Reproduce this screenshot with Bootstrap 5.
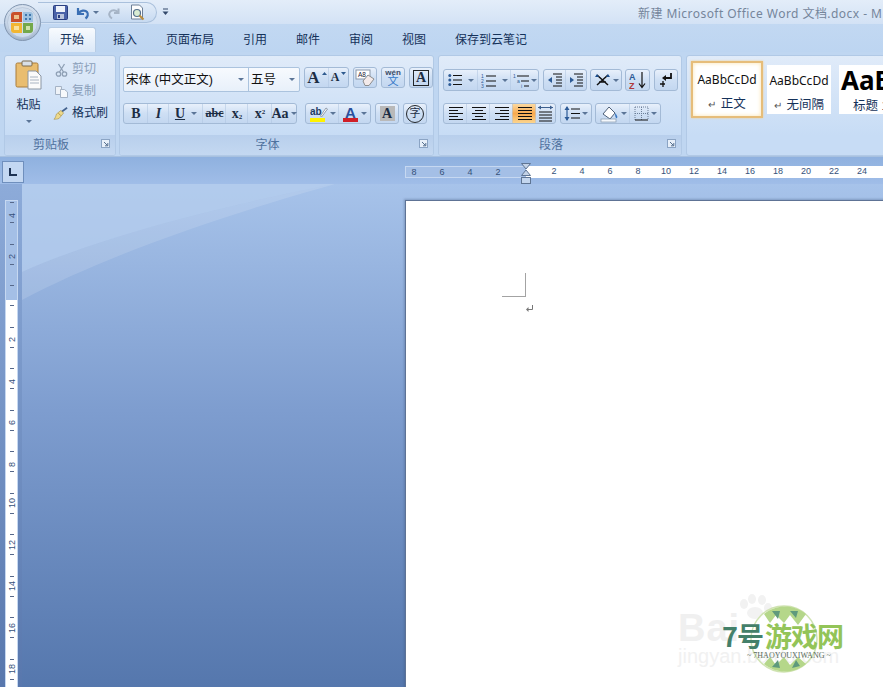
<!DOCTYPE html>
<html lang="zh-CN">
<head>
<meta charset="utf-8">
<title>新建 Microsoft Office Word 文档.docx</title>
<link href="https://cdn.jsdelivr.net/npm/bootstrap@5.3.0/dist/css/bootstrap.min.css" rel="stylesheet">
<style>
html,body{height:100%;margin:0;overflow:hidden}
body{font-family:"Liberation Sans","Noto Sans CJK SC",sans-serif;font-size:12px;color:#15325a;background:#bdd5f0}
.wd-app{width:883px;height:687px}
.wd-title{height:24px;background:linear-gradient(#e3edf9,#d3e2f5);flex:none}
.wd-qat{margin-left:38px;margin-top:2px;width:119px;height:21px;border:1px solid #a9c0dc;border-left:0;border-radius:0 11px 11px 0;background:linear-gradient(#e3edf9,#c7daf1);padding-left:15px;gap:8px}
.wd-undo{gap:3px}
.wd-caption{margin-left:auto;color:#75859b;font:12px/28px "Noto Sans","Noto Sans CJK SC",sans-serif;white-space:nowrap;width:245px;flex:none;letter-spacing:.45px}
.wd-qatmore{margin-left:5px;margin-top:8px}
.wd-orb{left:4px;top:4px;width:38px;height:38px;z-index:3}
.wd-tabs{height:28px;flex:none;padding-left:48px;background:linear-gradient(#c2d8f2,#bdd5f1);flex-wrap:nowrap}
.wd-tabs .nav-link{padding:0 13.5px;height:25px;margin-top:3px;color:#15325a;font-size:12px;line-height:24px;border:1px solid transparent;white-space:nowrap}
.wd-tabs .nav-link.active{padding:0 11px;margin-right:1px;width:48px;height:26px;background:linear-gradient(#f8fbfe,#dbe8f8);border-color:#b7cce4 #b7cce4 transparent;border-radius:3px 3px 0 0}
.wd-tabs .wd-tab-first{padding-left:15px}
.wd-ribbon{height:105px;flex:none;padding:3px 0 0 4px;gap:3px;background:#bfd6f1;border-bottom:1px solid #a8c1e0}
.wd-grp{height:101px;border:1px solid #b1c9e6;border-radius:3px;background:linear-gradient(#e0ebf9,#c7dcf5 80%);flex:none;overflow:hidden}
.wd-g1{width:112px}.wd-g2{width:315px}.wd-g3{width:244px;margin-left:1px}.wd-g4{width:205px;margin-left:1px}
.wd-body{flex:1 1 auto;min-height:0}
.wd-foot{height:20px;flex:none;padding-right:18px;text-align:center;color:#4f719e;font-size:12px;line-height:21px;background:linear-gradient(#b8cfec,#c4d8f1)}
.wd-launch{right:5px;bottom:7px;display:block}
.wd-paste{width:47px;padding-top:4px;text-align:center}
.wd-paste-txt{margin-top:8px;font-size:12px;line-height:14px;color:#15325a}
.wd-clip{padding-top:5px;gap:5px;margin-left:3px}
.wd-clip-item{height:17px;gap:4px;line-height:17px;color:#15325a}
.wd-clip-off{color:#8ba0ba}
.wd-brush{margin-left:-2px}
.wd-row1{padding-top:11px;padding-left:3px;height:37px}
.wd-row2{padding-top:10px;padding-left:3px}
.wd-gap{gap:4px}
.wd-combo{height:25px;width:178px;border:1px solid #abc3de;background:linear-gradient(#f7fafe,#e8f0fa);border-radius:2px}
.wd-combo-a{width:125px;border-right:1px solid #abc3de;padding-left:2px;line-height:22px;font-size:12.5px;color:#111}
.wd-combo-b{flex:1;padding-left:2px;line-height:22px;font-size:12.5px;color:#111}
.btn-group.wd-clu{border:1px solid #a3bad6;border-radius:3px;background:linear-gradient(#e8f0fb,#cedff4 50%,#c3d7f0);flex:none}
.btn.wd-tool{padding:0;border:0;border-radius:0;height:19px;min-width:20px;display:inline-flex;align-items:center;justify-content:center;gap:2px;background:transparent;font-size:12px;color:#1c2d44;line-height:1;flex:none}
.btn.wd-tool+.btn.wd-tool{border-left:1px solid rgba(174,197,224,.55)}
.btn.wd-tool.wd-on{background:linear-gradient(#fbd9a0,#f8a94e 50%,#fbd58f)}
.wd-bold{font:700 14px "Liberation Serif",serif}
.wd-it{font:italic 700 14px "Liberation Serif",serif}
.wd-un{font:700 14px "Liberation Serif",serif;text-decoration:underline}
.wd-st{font:700 12px "Liberation Serif",serif;text-decoration:line-through}
.wd-dd{display:inline-block;width:0;height:0;border:3px solid transparent;border-top:3px solid #5b7597;border-bottom:0;flex:none}
.wd-single{width:24px;flex:none}
.wd-galitem{height:49px;width:64px;background:#fff;text-align:center;margin-top:4px;flex:none;overflow:hidden}
.wd-galitem.wd-sel{height:57px;width:72px;margin-top:0;border:2px solid #e6bd7a;box-shadow:0 0 4px #fbe3ae inset,0 0 2px #f5d08c;padding-top:6px}
.wd-aa{font:12px/22px "Noto Sans",sans-serif;color:#111;white-space:nowrap;margin-top:5px}
.wd-sel .wd-aa{margin-top:0}
.wd-big{font:700 26px/30px "Noto Sans",sans-serif;color:#000;text-align:left;padding-left:2px;white-space:nowrap}
.wd-gl{font-size:12.5px;line-height:16px;color:#15325a;white-space:nowrap;margin-top:5px}
.wd-gl2{text-align:left;padding-left:14px;margin-top:3px}
.wd-rt{font-size:10px;color:#555;margin-right:1px}
.wd-gal{padding:5px 0 0 4px;gap:4px}
.wd-rulerrow{height:27px;flex:none;background:linear-gradient(#8fb1df,#a0bde8)}
.wd-lbox{width:22px;height:22px;margin:4px 0 0 2px;border:1px solid #6f8fbd;background:#c3d7f2;flex:none}
.wd-hr{margin:9px 0 0 381px;height:12px;width:478px;overflow:hidden;flex:none}
.wd-hr-d{width:121px;flex:none;padding-right:14px;background:#a4bfe6;border:1px solid #c6d8f1;border-right:0;justify-content:flex-end}
.wd-hr-l{flex:1 1 auto;padding-left:14px;background:#fff}
.wd-hc{width:28px;flex:none;text-align:center;font-size:9px;line-height:11px;color:#35517a}
.wd-work{flex:1 1 auto;min-height:0}
.wd-strip{width:22px;flex:none;background:linear-gradient(#8dabd9,#5877ad);padding-left:5px}
.wd-vr{width:13px;height:100%;overflow:hidden;margin-top:16px;background:linear-gradient(#a4bfe6 99px,#fff 99px);border:1px solid #c6d8f1;border-bottom:0}
.wd-vc{height:41.5px;flex:none;gap:4.6px;color:#35517a;font-size:9px}
.wd-vc:first-child{margin-top:-9px}
.wd-vt{width:4px;height:1px;background:#56688a;flex:none}
.wd-vn{height:10px;line-height:10px;writing-mode:vertical-rl;transform:rotate(180deg);flex:none;white-space:nowrap}
.wd-desk{flex:1 1 auto;min-width:0;background:linear-gradient(#a7c3ea 0,#7e9dcf 45%,#5577ad 100%);padding:16px 0 0 383px;overflow:hidden}
.wd-swoosh{left:0;top:0}
.wd-page{width:500px;height:520px;background:#fff;border-left:1px solid #5e7395;border-top:1px solid #5e7395;padding:72px 0 0 96px;box-shadow:-1px -1px 2px rgba(60,80,120,.35);z-index:1}
.wd-crop{width:24px;height:24px;border-right:1px solid #a3a3a3;border-bottom:1px solid #a3a3a3}
.wd-ret{margin:7px 0 0 23px;display:block}
.wd-mark{left:272px;top:393px;width:175px;height:80px;z-index:2}
.wd-mk-bai{left:0;top:15px;font:700 38px/38px "Liberation Sans",sans-serif;color:#f0f0f0;letter-spacing:1px}
.wd-mk-jy{left:0;top:52px;font:20px/20px "Liberation Sans",sans-serif;color:#f1f1f1;white-space:nowrap}
.wd-mk-7{left:44px;top:27px;font:700 27px/30px "Noto Sans CJK SC",sans-serif;color:#44806a;white-space:nowrap;letter-spacing:-1px}
.wd-mk-7 em{font-style:normal;color:#93c458;margin-left:2px}
.wd-mk-sub{left:69px;top:57px;font:8px/9px "Liberation Serif",serif;color:#5b6d60;white-space:nowrap}
</style>
</head>
<body>
<svg width="0" height="0" class="position-absolute">
<defs>
<g id="i-al"><path d="M1 2h14M1 5h9M1 8h14M1 11h9M1 14h14" stroke="#111" stroke-width="1.2" fill="none" transform="translate(0 -.5)"/></g>
<g id="i-ac"><path d="M1 2h14M4 5h8M1 8h14M4 11h8M1 14h14" stroke="#111" stroke-width="1.2" fill="none" transform="translate(0 -.5)"/></g>
<g id="i-ar"><path d="M1 2h14M6 5h9M1 8h14M6 11h9M1 14h14" stroke="#111" stroke-width="1.2" fill="none" transform="translate(0 -.5)"/></g>
<g id="i-aj"><path d="M1 2h14M1 5h14M1 8h14M1 11h14M1 14h14" stroke="#111" stroke-width="1.2" fill="none" transform="translate(0 -.5)"/></g>
<g id="i-la"><rect x=".5" y=".5" width="8" height="8" fill="#e7eff9" stroke="#8ba4c4"/><path d="M3 3l3.500 3.500M6.800 4v2.800H4" stroke="#56708f" fill="none"/></g>
</defs>
</svg>
<div class="wd-app d-flex flex-column position-relative overflow-hidden">

  <svg class="wd-orb position-absolute" viewBox="0 0 38 38" aria-label="Office">
    <defs>
      <radialGradient id="orb" cx=".5" cy=".35" r=".7"><stop offset="0" stop-color="#f2f6fb"/><stop offset=".7" stop-color="#c4d3e6"/><stop offset="1" stop-color="#8ea2bb"/></radialGradient>
    </defs>
    <circle cx="18.500" cy="18.500" r="18" fill="url(#orb)" stroke="#8296b0"/>
    <circle cx="18.500" cy="18.500" r="15" fill="#cfdcec" stroke="#aebed2" stroke-width=".6"/>
    <path d="M7 11q0-3 3-3h8v10H7z" fill="#c9512b"/>
    <rect x="10" y="11" width="5" height="4" fill="#ecc18c"/>
    <path d="M19 8h7q3 0 3 3v7H19z" fill="#9dc1df"/>
    <path d="M21 10h2v2h-2zM25 10h2v2h-2zM21 14h2v2h-2zM25 14h2v2h-2z" fill="#3f77ad"/>
    <path d="M7 19h11v10h-8q-3 0-3-3z" fill="#f2b632"/>
    <rect x="10" y="22" width="5" height="4" fill="#f9e29c"/>
    <path d="M19 19h10v7q0 3-3 3h-7z" fill="#74a84a"/>
    <rect x="22" y="22" width="4" height="4" fill="#cfe3a8"/>
  </svg>

  <div class="wd-title d-flex">
    <div class="wd-qat d-flex align-items-center">
      <svg width="15" height="15" viewBox="0 0 15 15" aria-label="保存"><rect x=".5" y=".5" width="14" height="14" rx="1" fill="#4a62a8" stroke="#2b3f80"/><rect x="3" y="1" width="9" height="6" fill="#eef2fa"/><rect x="4" y="9" width="7" height="5" fill="#b9c4dc"/><rect x="5" y="10" width="2" height="3" fill="#2b3f80"/></svg>
      <span class="wd-undo d-inline-flex align-items-center">
      <svg width="14" height="14" viewBox="0 0 14 14" aria-label="撤消"><path d="M2 2v6h6M2.600 7.400C4.500 4.400 9 3.600 11 6c1.600 2 .8 4.800-1.500 6.500" fill="none" stroke="#3a6fb4" stroke-width="2.200"/></svg>
      <span class="wd-dd"></span></span>
      <svg width="14" height="14" viewBox="0 0 14 14" aria-label="恢复"><path d="M11.500 2.500v4.500h-4.500M11 6.500C9 3.500 5 3.500 3 6c-1.600 2.200-.5 5 2 6.500" fill="none" stroke="#a6b4c6" stroke-width="2"/></svg>
      <svg width="17" height="17" viewBox="0 0 17 17" aria-label="打印预览"><path d="M2.500 1h8l3 3v11h-11z" fill="#fdfdfd" stroke="#6d7f96"/><circle cx="8" cy="9" r="3.500" fill="#d9ecd2" stroke="#55708c" stroke-width="1.200"/><path d="M10.500 11.500l4 4" stroke="#b98c3b" stroke-width="2"/></svg>
    </div>
    <svg class="wd-qatmore" width="7" height="9" viewBox="0 0 7 9"><path d="M1 1h5" stroke="#33496b"/><path d="M.5 3.500h6L3.500 7z" fill="#33496b"/></svg>
    <div class="wd-caption">新建 Microsoft Office Word 文档.docx - M</div>
  </div>

  <ul class="nav wd-tabs">
    <li class="nav-item"><a class="nav-link active text-center" href="#">开始</a></li>
    <li class="nav-item"><a class="nav-link wd-tab-first" href="#">插入</a></li>
    <li class="nav-item"><a class="nav-link" href="#">页面布局</a></li>
    <li class="nav-item"><a class="nav-link" href="#">引用</a></li>
    <li class="nav-item"><a class="nav-link" href="#">邮件</a></li>
    <li class="nav-item"><a class="nav-link" href="#">审阅</a></li>
    <li class="nav-item"><a class="nav-link" href="#">视图</a></li>
    <li class="nav-item"><a class="nav-link" href="#">保存到云笔记</a></li>
  </ul>

  <div class="wd-ribbon d-flex">

    <section class="wd-grp wd-g1 d-flex flex-column position-relative">
      <div class="wd-body d-flex">
        <div class="wd-paste d-flex flex-column align-items-center">
          <svg width="28" height="30" viewBox="0 0 28 30" aria-label="粘贴"><rect x="1" y="3" width="22" height="24" rx="1.500" fill="#e9bd6f" stroke="#a97d3c"/><rect x="7" y="1" width="10" height="5" rx="1" fill="#d9dfe6" stroke="#7d6a4c"/><path d="M13 11h8l5 5v13H13z" fill="#fbfbfb" stroke="#8b96a3"/><path d="M15 17h8M15 20h9M15 23h9" stroke="#a9b4c2"/></svg>
          <div class="wd-paste-txt">粘贴</div>
          <span class="wd-dd mt-2"></span>
        </div>
        <div class="wd-clip d-flex flex-column">
          <div class="wd-clip-item wd-clip-off d-flex align-items-center"><svg width="13" height="14" viewBox="0 0 13 14" aria-label="剪切"><path d="M3.500 1l5 8M9.500 1l-5 8" stroke="#8fa0b5" stroke-width="1.300"/><circle cx="3.500" cy="11" r="2.200" fill="none" stroke="#8fa0b5" stroke-width="1.300"/><circle cx="9.500" cy="11" r="2.200" fill="none" stroke="#8fa0b5" stroke-width="1.300"/></svg>剪切</div>
          <div class="wd-clip-item wd-clip-off d-flex align-items-center"><svg width="13" height="13" viewBox="0 0 13 13" aria-label="复制"><path d="M.5 1.500h6v8h-6z" fill="#eef2f7" stroke="#a5b3c5"/><path d="M5.500 4.500h4l3 2.500v5.500h-7z" fill="#f7f9fb" stroke="#a5b3c5"/></svg>复制</div>
          <div class="wd-clip-item d-flex align-items-center"><svg class="wd-brush" width="15" height="15" viewBox="0 0 17 15" aria-label="格式刷"><path d="M16 1L9 6" stroke="#46648f" stroke-width="2"/><path d="M9 4l3 3-5 6c-2 1-4 1-6 1 2-1 2-4 3-6z" fill="#edd98b" stroke="#a99148" stroke-width=".7"/><path d="M6 7l3 3" stroke="#a99148"/></svg>格式刷</div>
        </div>
      </div>
      <div class="wd-foot">剪贴板</div>
      <svg class="wd-launch position-absolute" width="9" height="9" viewBox="0 0 9 9"><use href="#i-la"/></svg>
    </section>

    <section class="wd-grp wd-g2 d-flex flex-column position-relative">
      <div class="wd-body">
        <div class="wd-row1 d-flex wd-gap">
          <div class="wd-combo d-flex flex-none">
            <div class="wd-combo-a d-flex align-items-center justify-content-between pe-1"><span>宋体 (中文正文)</span><span class="wd-dd"></span></div>
            <div class="wd-combo-b d-flex align-items-center justify-content-between pe-1"><span>五号</span><span class="wd-dd"></span></div>
          </div>
          <div class="btn-group wd-clu align-self-start">
            <button class="btn wd-tool" style="width:24px"><span style="font:700 17px 'Liberation Serif',serif">A</span><svg width="5" height="3" viewBox="0 0 5 3" class="mb-2"><path d="M0 3h5L2.500 0z" fill="#2f5b8f"/></svg></button>
            <button class="btn wd-tool" style="width:20px"><span style="font:700 12px 'Liberation Serif',serif">A</span><svg width="5" height="3" viewBox="0 0 5 3" class="mb-2"><path d="M0 0h5L2.500 3z" fill="#2f5b8f"/></svg></button>
          </div>
          <div class="btn-group wd-clu align-self-start wd-single">
            <button class="btn wd-tool w-100"><svg width="20" height="18" viewBox="0 0 20 18" aria-label="清除格式"><rect x="1" y="1" width="14" height="9" fill="#fff" stroke="#8a98aa"/><text x="3" y="8" font-size="6.500" font-family="Liberation Sans" fill="#223">A8</text><path d="M8 12l5-6 6 4-5 6.500H10z" fill="#f3eaea" stroke="#8d8d8d"/></svg></button>
          </div>
          <div class="btn-group wd-clu align-self-start wd-single">
            <button class="btn wd-tool w-100 flex-column"><svg width="22" height="19" viewBox="0 0 22 19" aria-label="拼音指南"><text x="11" y="6.500" text-anchor="middle" font-size="8" font-weight="700" font-family="Liberation Sans" fill="#3a4a66">wén</text><text x="11" y="17" text-anchor="middle" font-size="11" font-family="Noto Sans CJK SC" fill="#3478c8">文</text></svg></button>
          </div>
          <div class="btn-group wd-clu align-self-start wd-single">
            <button class="btn wd-tool w-100"><span class="border border-dark d-inline-flex align-items-center justify-content-center" style="width:16px;height:16px;font:700 14px 'Liberation Serif',serif">A</span></button>
          </div>
        </div>
        <div class="wd-row2 d-flex wd-gap">
          <div class="btn-group wd-clu">
            <button class="btn wd-tool" style="width:24px"><span class="wd-bold">B</span></button>
            <button class="btn wd-tool" style="width:22px"><span class="wd-it">I</span></button>
            <button class="btn wd-tool" style="width:35px"><span class="wd-un">U</span><span class="wd-dd ms-1"></span></button>
            <button class="btn wd-tool" style="width:24px"><span class="wd-st">abc</span></button>
            <button class="btn wd-tool" style="width:23px"><span class="wd-bold">x<sub style="font-size:7px">2</sub></span></button>
            <button class="btn wd-tool" style="width:25px"><span class="wd-bold">x<sup style="font-size:7px">2</sup></span></button>
            <button class="btn wd-tool" style="width:25px"><span class="wd-bold">Aa</span><span class="wd-dd"></span></button>
          </div>
          <div class="btn-group wd-clu ms-1">
            <button class="btn wd-tool" style="width:33px"><svg width="18" height="18" viewBox="0 0 18 18" aria-label="突出显示"><text x="0" y="10" font-size="10" font-weight="700" font-family="Liberation Sans" fill="#223b63">ab</text><path d="M10.500 11l5.500-8 1.500 1-6 8z" fill="#fff" stroke="#6b7a8c" stroke-width=".7"/><rect x="0" y="13" width="15" height="4" fill="#fff200"/></svg><span class="wd-dd"></span></button>
            <button class="btn wd-tool" style="width:32px"><svg width="17" height="18" viewBox="0 0 17 18" aria-label="字体颜色"><text x="8.500" y="12.500" text-anchor="middle" font-size="15" font-weight="700" font-family="Liberation Sans" fill="#2a4f9c">A</text><rect x="1" y="13" width="15" height="4" fill="#d01f27"/></svg><span class="wd-dd"></span></button>
          </div>
          <div class="btn-group wd-clu wd-single">
            <button class="btn wd-tool w-100"><span class="d-inline-flex align-items-center justify-content-center" style="width:15px;height:15px;background:#b9b9b9;font:700 14px 'Liberation Serif',serif">A</span></button>
          </div>
          <div class="btn-group wd-clu wd-single">
            <button class="btn wd-tool w-100"><span class="d-inline-flex align-items-center justify-content-center rounded-circle border border-dark" style="width:18px;height:18px;font-size:11px">字</span></button>
          </div>
        </div>
      </div>
      <div class="wd-foot">字体</div>
      <svg class="wd-launch position-absolute" width="9" height="9" viewBox="0 0 9 9"><use href="#i-la"/></svg>
    </section>

    <section class="wd-grp wd-g3 d-flex flex-column position-relative">
      <div class="wd-body">
        <div class="d-flex wd-gap" style="padding:13px 0 0 4px;height:35px">
          <div class="btn-group wd-clu">
            <button class="btn wd-tool" style="width:34px;height:20px"><svg width="14" height="14" viewBox="0 0 14 14" aria-label="项目符号"><path d="M5 2.500h9M5 7h9M5 11.500h9" stroke="#111" stroke-width="1.200"/><circle cx="1.800" cy="2.500" r="1.500" fill="#2c5a96"/><circle cx="1.800" cy="7" r="1.500" fill="#2c5a96"/><circle cx="1.800" cy="11.500" r="1.500" fill="#2c5a96"/></svg><span class="wd-dd ms-1"></span></button>
            <button class="btn wd-tool" style="width:34px;height:20px"><svg width="15" height="15" viewBox="0 0 15 15" aria-label="编号"><text x="0" y="5" font-size="5" font-family="Liberation Sans" fill="#2c5a96">1</text><text x="0" y="10" font-size="5" font-family="Liberation Sans" fill="#2c5a96">2</text><text x="0" y="15" font-size="5" font-family="Liberation Sans" fill="#2c5a96">3</text><path d="M5 3h10M5 8h10M5 13h10" stroke="#111" stroke-width="1.200"/></svg><span class="wd-dd ms-1"></span></button>
            <button class="btn wd-tool" style="width:28px;height:20px"><svg width="16" height="15" viewBox="0 0 16 15" aria-label="多级列表"><text x="0" y="5" font-size="5" font-family="Liberation Sans" fill="#2c5a96">1</text><text x="4" y="10" font-size="5" font-family="Liberation Sans" fill="#2c5a96">a</text><text x="8" y="15" font-size="5" font-family="Liberation Sans" fill="#2c5a96">i</text><path d="M4 3h12M8 8h8M11 13h5" stroke="#111" stroke-width="1.200"/></svg><span class="wd-dd"></span></button>
          </div>
          <div class="btn-group wd-clu">
            <button class="btn wd-tool" style="width:22px;height:20px"><svg width="16" height="14" viewBox="0 0 16 14" aria-label="减少缩进量"><path d="M6 1h9M9 4h6M9 7h6M9 10h6M6 13h9" stroke="#111" stroke-width="1.200"/><path d="M1 7l4-3v6z" fill="#2c5a96"/></svg></button>
            <button class="btn wd-tool" style="width:21px;height:20px"><svg width="16" height="14" viewBox="0 0 16 14" aria-label="增加缩进量"><path d="M6 1h9M9 4h6M9 7h6M9 10h6M6 13h9" stroke="#111" stroke-width="1.200"/><path d="M6 7L2 4v6z" fill="#2c5a96"/></svg></button>
          </div>
          <div class="btn-group wd-clu" style="margin-left:-1px">
            <button class="btn wd-tool" style="width:30px;height:20px"><svg width="17" height="14" viewBox="0 0 17 14" aria-label="中文版式"><path d="M3 2l11 10M14 2L3 12M5 9h7" stroke="#111" stroke-width="1.500" fill="none"/><path d="M1 4l2-3 2 3M12 4l2-3 2 3" fill="#1d4f8f"/></svg><span class="wd-dd"></span></button>
          </div>
          <div class="btn-group wd-clu" style="margin-left:-1px">
            <button class="btn wd-tool" style="width:23px;height:20px"><svg width="18" height="18" viewBox="0 0 18 18" aria-label="排序"><text x="0" y="8.500" font-size="9" font-weight="700" font-family="Liberation Sans" fill="#2c5a96">A</text><text x="0" y="17.500" font-size="9" font-weight="700" font-family="Liberation Sans" fill="#b0383a">Z</text><path d="M13 1v15M10 12.500l3 4 3-4" stroke="#111" stroke-width="1.200" fill="none"/></svg></button>
          </div>
          <div class="btn-group wd-clu">
            <button class="btn wd-tool" style="width:22px;height:20px"><svg width="14" height="16" viewBox="0 0 14 16" aria-label="显示编辑标记"><path d="M12 1v5H6" stroke="#111" stroke-width="1.800" fill="none"/><path d="M7 3L3 6l4 3z" fill="#111"/><path d="M4 9v6M1 12h5" stroke="#111" stroke-width="1.300"/></svg></button>
          </div>
        </div>
        <div class="d-flex wd-gap" style="padding:12px 0 0 4px">
          <div class="btn-group wd-clu">
            <button class="btn wd-tool" style="width:23px"><svg width="16" height="16" viewBox="0 0 16 16"><use href="#i-al"/></svg></button>
            <button class="btn wd-tool" style="width:24px"><svg width="16" height="16" viewBox="0 0 16 16"><use href="#i-ac"/></svg></button>
            <button class="btn wd-tool" style="width:24px"><svg width="16" height="16" viewBox="0 0 16 16"><use href="#i-ar"/></svg></button>
            <button class="btn wd-tool wd-on" style="width:24px"><svg width="16" height="16" viewBox="0 0 16 16"><use href="#i-aj"/></svg></button>
            <button class="btn wd-tool" style="width:19px"><svg width="17" height="17" viewBox="0 0 17 17" aria-label="分散对齐"><path d="M2 7h13M2 10h13M2 13h13M2 16h13" stroke="#111" stroke-width="1.200"/><path d="M1 2.500h15" stroke="#3c5f8e"/><path d="M1 2.500l3-2v4zM16 2.500l-3-2v4z" fill="#3c5f8e"/></svg></button>
          </div>
          <div class="btn-group wd-clu">
            <button class="btn wd-tool" style="width:30px"><svg width="16" height="17" viewBox="0 0 16 17" aria-label="行距"><path d="M7 4h9M7 8.500h9M7 13h9" stroke="#111" stroke-width="1.200"/><path d="M3 2v13" stroke="#2c5a96" stroke-width="1.200"/><path d="M.5 5L3 1l2.500 4zM.5 12L3 16l2.500-4z" fill="#2c5a96"/></svg><span class="wd-dd"></span></button>
          </div>
          <div class="btn-group wd-clu" style="margin-left:-1px">
            <button class="btn wd-tool" style="width:34px"><svg width="19" height="18" viewBox="0 0 19 18" aria-label="底纹"><path d="M3 9l6-7 6 6-5 6z" fill="#fff" stroke="#4d5f78"/><path d="M15 8c2 2 3 4 2 5s-2-1-2-5z" fill="#3a78c2"/><rect x="1" y="14" width="15" height="3" fill="#f4f8fc" stroke="#8598ad" stroke-width=".7"/></svg><span class="wd-dd"></span></button>
            <button class="btn wd-tool" style="width:31px"><svg width="15" height="15" viewBox="0 0 15 15" aria-label="边框"><path d="M1 1h13v13M1 1v13M7.500 1v13M1 7.500h13" stroke="#6a7d96" stroke-dasharray="1 1" fill="none"/><path d="M1 14h13" stroke="#111" stroke-width="1.200"/></svg><span class="wd-dd"></span></button>
          </div>
        </div>
      </div>
      <div class="wd-foot">段落</div>
      <svg class="wd-launch position-absolute" width="9" height="9" viewBox="0 0 9 9"><use href="#i-la"/></svg>
    </section>

    <section class="wd-grp wd-g4 d-flex">
      <div class="wd-gal d-flex">
        <div class="wd-galitem wd-sel">
          <div class="wd-aa">AaBbCcDd</div>
          <div class="wd-gl"><span class="wd-rt">↵</span> 正文</div>
        </div>
        <div class="wd-galitem">
          <div class="wd-aa">AaBbCcDd</div>
          <div class="wd-gl"><span class="wd-rt">↵</span> 无间隔</div>
        </div>
        <div class="wd-galitem ms-1">
          <div class="wd-big">AaB</div>
          <div class="wd-gl wd-gl2">标题 1</div>
        </div>
      </div>
    </section>
  </div>

  <div class="wd-rulerrow d-flex position-relative">
    <div class="wd-lbox d-flex align-items-center justify-content-center">
      <svg width="10" height="10" viewBox="0 0 10 10" aria-label="制表符"><path d="M2 1v7h7" fill="none" stroke="#1e3354" stroke-width="2"/></svg>
    </div>
    <div class="wd-hr d-flex">
      <div class="wd-hr-d d-flex">
        <span class="wd-hc">8</span><span class="wd-hc">6</span><span class="wd-hc">4</span><span class="wd-hc">2</span>
      </div>
      <div class="wd-hr-l d-flex">
        <span class="wd-hc">2</span><span class="wd-hc">4</span><span class="wd-hc">6</span><span class="wd-hc">8</span><span class="wd-hc">10</span><span class="wd-hc">12</span><span class="wd-hc">14</span><span class="wd-hc">16</span><span class="wd-hc">18</span><span class="wd-hc">20</span><span class="wd-hc">22</span><span class="wd-hc">24</span>
      </div>
    </div>
    <svg class="position-absolute" style="left:521px;top:6px" width="10" height="21" viewBox="0 0 10 21" aria-label="缩进"><path d="M.5.500h9L5 6zM.5 12.500h9L5 7z" fill="#c3d2e6" stroke="#5f7593"/><rect x=".5" y="14.500" width="9" height="6" fill="#c3d6ee" stroke="#5f7593"/></svg>
  </div>

  <div class="wd-work d-flex">
    <div class="wd-strip">
      <div class="wd-vr d-flex flex-column">
        <div class="wd-vc d-flex flex-column align-items-center justify-content-center"><i class="wd-vt"></i><span class="wd-vn">4</span><i class="wd-vt"></i></div>
        <div class="wd-vc d-flex flex-column align-items-center justify-content-center"><i class="wd-vt"></i><span class="wd-vn">2</span><i class="wd-vt"></i></div>
        <div class="wd-vc d-flex flex-column align-items-center justify-content-center"><i class="wd-vt"></i><span class="wd-vn">&nbsp;</span><i class="wd-vt"></i></div>
        <div class="wd-vc d-flex flex-column align-items-center justify-content-center"><i class="wd-vt"></i><span class="wd-vn">2</span><i class="wd-vt"></i></div>
        <div class="wd-vc d-flex flex-column align-items-center justify-content-center"><i class="wd-vt"></i><span class="wd-vn">4</span><i class="wd-vt"></i></div>
        <div class="wd-vc d-flex flex-column align-items-center justify-content-center"><i class="wd-vt"></i><span class="wd-vn">6</span><i class="wd-vt"></i></div>
        <div class="wd-vc d-flex flex-column align-items-center justify-content-center"><i class="wd-vt"></i><span class="wd-vn">8</span><i class="wd-vt"></i></div>
        <div class="wd-vc d-flex flex-column align-items-center justify-content-center"><i class="wd-vt"></i><span class="wd-vn">10</span><i class="wd-vt"></i></div>
        <div class="wd-vc d-flex flex-column align-items-center justify-content-center"><i class="wd-vt"></i><span class="wd-vn">12</span><i class="wd-vt"></i></div>
        <div class="wd-vc d-flex flex-column align-items-center justify-content-center"><i class="wd-vt"></i><span class="wd-vn">14</span><i class="wd-vt"></i></div>
        <div class="wd-vc d-flex flex-column align-items-center justify-content-center"><i class="wd-vt"></i><span class="wd-vn">16</span><i class="wd-vt"></i></div>
        <div class="wd-vc d-flex flex-column align-items-center justify-content-center"><i class="wd-vt"></i><span class="wd-vn">18</span><i class="wd-vt"></i></div>
      </div>
    </div>
    <div class="wd-desk position-relative">
      <svg class="wd-swoosh position-absolute" width="383" height="130" viewBox="0 0 383 130">
        <path d="M0 0h313C220 18 90 48 0 88z" fill="#b6cdee" opacity=".75"/>
        <path d="M0 88C90 48 220 18 313 0C220 26 90 68 0 116z" fill="#fff" opacity=".13"/>
      </svg>
      <div class="wd-page position-relative">
        <div class="wd-crop"></div>
        <svg class="wd-ret" width="9" height="9" viewBox="0 0 9 9" aria-label="段落标记"><path d="M7.500 1v4.500H2" fill="none" stroke="#777"/><path d="M3.500 3L1 5.500 3.500 8z" fill="#777"/></svg>
        <div class="wd-mark position-absolute">
          <div class="wd-mk-bai position-absolute">Bai</div>
          <svg class="position-absolute" style="left:60px;top:0" width="35" height="26" viewBox="0 0 35 26"><g fill="#f2f2f2"><ellipse cx="6" cy="10" rx="4" ry="5"/><ellipse cx="14" cy="5" rx="4" ry="5"/><ellipse cx="24" cy="6" rx="4" ry="5"/><ellipse cx="30" cy="14" rx="4" ry="5"/><ellipse cx="17" cy="19" rx="8" ry="6"/></g></svg>
          <div class="wd-mk-jy position-absolute">jingyan.baidu.com</div>
          <svg class="position-absolute" style="left:70px;top:9px" width="72" height="72" viewBox="0 0 72 72"><circle cx="36" cy="36" r="33" fill="none" stroke="#d0e3b2" stroke-width="1.500"/><path d="M16 11C28 1 46 1 58 11L50 22 42 12 36 20 28 12 22 20z" fill="#b5d78a"/><path d="M16 61C28 71 46 71 58 61L50 54 42 62 36 54 28 62 22 54z" fill="#b5d78a"/><path d="M24 8l6 8 2-8zM42 8l6 7 2-7z" fill="#5f9a7d"/><path d="M24 64l6-7 2 8zM44 65l4-8 4 6z" fill="#5f9a7d"/></svg>
          <div class="wd-mk-7 position-absolute">7号<em>游戏网</em></div>
          <div class="wd-mk-sub position-absolute">~ 7HAOYOUXIWANG ~</div>
        </div>
      </div>
    </div>
  </div>
</div>
<script src="https://cdn.jsdelivr.net/npm/bootstrap@5.3.0/dist/js/bootstrap.bundle.min.js"></script>
</body>
</html>
